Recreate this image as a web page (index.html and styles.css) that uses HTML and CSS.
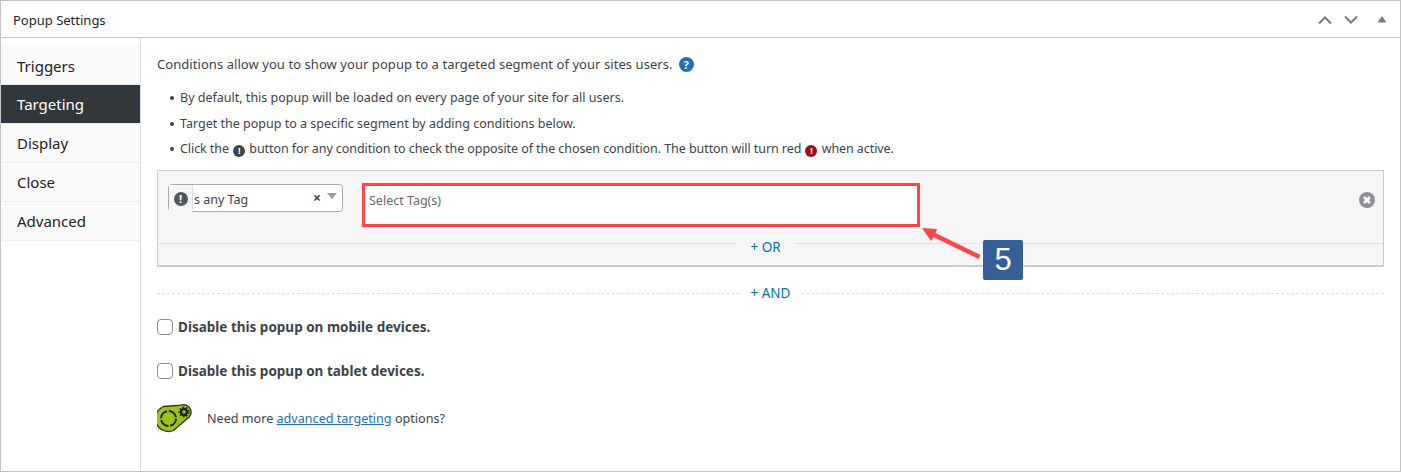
FILE: index.html
```html
<!DOCTYPE html>
<html lang="en">
  <head>
    <meta charset="UTF-8" />
    <title>Popup Settings</title>
    <link rel="stylesheet" href="styles.css">
  </head>
  <body>
    <div class="panel">
      <div class="panel-head">
        <h2>Popup Settings</h2>
        <div class="head-icons">
          <svg width="16" height="10" viewBox="0 0 16 10"><path d="M2 8.500 8 2.500l6 6" fill="none" stroke="#787c82" stroke-width="2"/></svg>
          <svg width="16" height="10" viewBox="0 0 16 10"><path d="M2 1.500l6 6 6-6" fill="none" stroke="#787c82" stroke-width="2"/></svg>
          <svg class="collapse" width="10" height="7" viewBox="0 0 10 7"><path d="M5 0l4.500 6.500H.5z" fill="#787c82"/></svg>
        </div>
      </div>
      <div class="panel-body">
        <ul class="tabs">
          <li>Triggers</li>
          <li class="active">Targeting</li>
          <li>Display</li>
          <li>Close</li>
          <li>Advanced</li>
        </ul>
        <div class="content">
          <p class="intro">Conditions allow you to show your popup to a targeted segment of your sites users. <span class="help">?</span></p>
          <ul class="notes">
            <li>By default, this popup will be loaded on every page of your site for all users.</li>
            <li>Target the popup to a specific segment by adding conditions below.</li>
            <li>Click the <span class="bang">!</span> button for any condition to check the opposite of the chosen condition. The button will turn red <span class="bang red">!</span> when active.</li>
          </ul>

          <div class="cond-box">
            <div class="cond-row">
              <div class="select">
                <span class="not-btn"><span class="bang big">!</span></span>
                <span class="select-text">s any Tag</span>
                <span class="clear">&times;</span>
                <span class="caret"></span>
              </div>
              <div class="tag-input">Select Tag(s)</div>
              <span class="remove">
                <svg width="16" height="16" viewBox="0 0 16 16"><circle cx="8" cy="8" r="8" fill="#8e9096"/><path d="M5 5l6 6M11 5l-6 6" stroke="#fff" stroke-width="2.600"/></svg>
              </span>
            </div>
            <div class="or-row"><span>+ OR</span></div>
          </div>

          <div class="and-row"><span>+ AND</span></div>

          <label class="check"><input type="checkbox"> Disable this popup on mobile devices.</label>
          <label class="check"><input type="checkbox"> Disable this popup on tablet devices.</label>

          <div class="promo">
            <svg width="36" height="30" viewBox="0 0 36 30">
              <path d="M6.500 2.500 24.100 1.100A7.500 7.500 0 0 1 29.900 14.900L16.500 26.500A13 13 0 0 1 6.500 2.500z" fill="#9cc31c" stroke="#2b3313" stroke-width="1.300"/>
              <circle cx="11.500" cy="14.500" r="7.500" fill="none" stroke="#1d2327" stroke-width="2" stroke-dasharray="10 1.800"/>
              <circle cx="27" cy="8" r="3" fill="#9cc31c" stroke="#1d2327" stroke-width="2.400"/>
              <circle cx="27" cy="8" r="4.800" fill="none" stroke="#1d2327" stroke-width="1.400" stroke-dasharray="1.700 1.700"/>
            </svg>
            <span>Need more <a href="#">advanced targeting</a> options?</span>
          </div>
        </div>
      </div>
    </div>

    <!-- screenshot annotation -->
    <svg class="arrow" width="62" height="34" viewBox="0 0 62 34">
      <path d="M1 1 16 2 14.500 6 59.500 28 57.500 32 12.500 10 10 14z" fill="#ff4545"/>
    </svg>
    <div class="step">5</div>
  </body>
</html>
```

FILE: styles.css
```css
* {
  padding: 0;
  margin: 0;
  box-sizing: border-box;
}
body {
  background: #fff;
  font-family: "Noto Sans", "Open Sans", sans-serif;
  font-size: 12px;
  color: #3c434a;
  height: 472px;
  overflow: hidden;
}
ul {
  list-style: none;
}
.panel {
  height: 472px;
  width: 1401px;
  border: 1px solid #c3c4c7;
  display: flex;
  flex-direction: column;
}
.panel-head {
  height: 37px;
  flex: none;
  border-bottom: 1px solid #c3c4c7;
  display: flex;
  align-items: center;
  justify-content: space-between;
  padding: 2px 13px 0 12px;
}
.panel-head h2 {
  font-size: 13px;
  font-weight: 400;
  color: #1d2327;
}
.head-icons {
  display: flex;
  align-items: center;
  gap: 10px;
}
.head-icons .collapse {
  margin-left: 8px;
  margin-top: -2px;
}
.panel-body {
  flex: 1;
  display: flex;
}
.tabs {
  width: 140px;
  flex: none;
  border-right: 1px solid #dcdcde;
  padding-top: 7px;
  font-size: 15px;
  color: #1d2327;
}
.tabs li {
  height: 39px;
  line-height: 38px;
  padding-left: 16px;
  background: #fafafa;
  border-bottom: 1px solid #eee;
}
.tabs li:first-child {
  height: 40px;
  padding-top: 2px;
}
.tabs li.active {
  background: #32373c;
  color: #fff;
}
.content {
  flex: 1;
  padding: 17px 16px 0;
}
.intro {
  font-size: 13px;
  line-height: 18px;
  letter-spacing: 0.06px;
  display: flex;
  align-items: center;
  gap: 6px;
}
.help {
  width: 15px;
  height: 15px;
  border-radius: 50%;
  background: #2271b1;
  color: #fff;
  font-size: 11px;
  font-weight: 700;
  line-height: 15px;
  text-align: center;
}
.notes {
  margin-top: 12px;
  padding-left: 13px;
  font-size: 12.500px;
}
.notes li {
  height: 25.500px;
  line-height: 25.500px;
  padding-left: 10px;
  position: relative;
}
.notes li:last-child {
  letter-spacing: -0.07px;
}
.notes li::before {
  content: "";
  position: absolute;
  left: 0;
  top: 11px;
  width: 4px;
  height: 4px;
  border-radius: 50%;
  background: #3c434a;
}
.bang {
  display: inline-block;
  width: 12px;
  height: 12px;
  margin: 0 1px;
  border-radius: 50%;
  background: #3c434a;
  color: #fff;
  font-size: 9px;
  font-weight: 700;
  line-height: 12px;
  text-align: center;
  vertical-align: -1px;
}
.bang.red {
  background: #a00c13;
}
.bang.big {
  width: 14px;
  height: 14px;
  margin: 0;
  line-height: 14px;
  font-size: 11px;
  background: #50575e;
}
.cond-box {
  margin-top: 8px;
  height: 97px;
  background: #f6f6f6;
  border: 1px solid #ccc;
  border-bottom-width: 2px;
  display: flex;
  flex-direction: column;
}
.cond-row {
  flex: 1;
  display: flex;
  align-items: flex-start;
  padding: 12px 8px 0 10px;
  border-bottom: 1px solid #e2e2e2;
}
.select {
  width: 175px;
  height: 28px;
  margin-top: 1px;
  background: #fff;
  border: 1px solid #aaa;
  border-radius: 4px;
  display: flex;
  align-items: center;
  font-size: 12.500px;
  color: #3c434a;
}
.not-btn {
  width: 24px;
  height: 28px;
  flex: none;
  background: #f6f6f6;
  border-right: 1px solid #ddd;
  display: flex;
  align-items: center;
  justify-content: center;
  margin-top: 2px;
}
.select-text {
  flex: 1;
  padding-left: 1px;
  margin-top: 4px;
}
.clear {
  font-size: 14px;
  font-weight: 700;
  margin-right: 6px;
  color: #3c434a;
}
.caret {
  width: 0;
  height: 0;
  border-left: 5px solid transparent;
  border-right: 5px solid transparent;
  border-top: 6px solid #999;
  margin: -3px 5px 0 0;
}
.tag-input {
  width: 558px;
  height: 44px;
  margin-left: 19px;
  background: #fff;
  border: 3px solid #ff4545;
  padding: 6px 4px;
  font-size: 12.500px;
  color: #646970;
}
.remove {
  margin-left: auto;
  margin-top: 9px;
  line-height: 0;
}
.or-row {
  height: 21px;
  text-align: center;
  color: #0073aa;
  font-size: 13.500px;
}
.or-row span {
  position: relative;
  top: -6px;
  background: #f6f6f6;
  padding: 0 13px;
  line-height: 18px;
  display: inline-block;
  margin-left: -10px;
}
.and-row {
  margin-top: 26px;
  height: 1px;
  border-top: 1px dashed #dcdcde;
  text-align: center;
  color: #0073aa;
  font-size: 13.500px;
}
.and-row span {
  display: inline-block;
  background: #fff;
  padding: 0 10px;
  position: relative;
  top: -10px;
  line-height: 18px;
}
.check {
  display: flex;
  align-items: center;
  gap: 5px;
  font-size: 13.500px;
  font-weight: 700;
  height: 18px;
}
.check input {
  appearance: none;
  width: 16px;
  height: 16px;
  background: #fff;
  border: 1px solid #8c8f94;
  border-radius: 4px;
}
.and-row + .check {
  margin-top: 24px;
}
.check + .check {
  margin-top: 26px;
}
.promo {
  margin-top: 24px;
  display: flex;
  align-items: center;
  gap: 14px;
  font-size: 12.600px;
}
.promo a {
  color: #2271b1;
}
.arrow {
  position: absolute;
  left: 921px;
  top: 227px;
}
.step {
  position: absolute;
  left: 983px;
  top: 240px;
  width: 40px;
  height: 40px;
  background: #355f95;
  border-radius: 2px;
  color: #fff;
  font-family: "Liberation Sans", sans-serif;
  font-size: 31px;
  line-height: 40px;
  text-align: center;
}
```
